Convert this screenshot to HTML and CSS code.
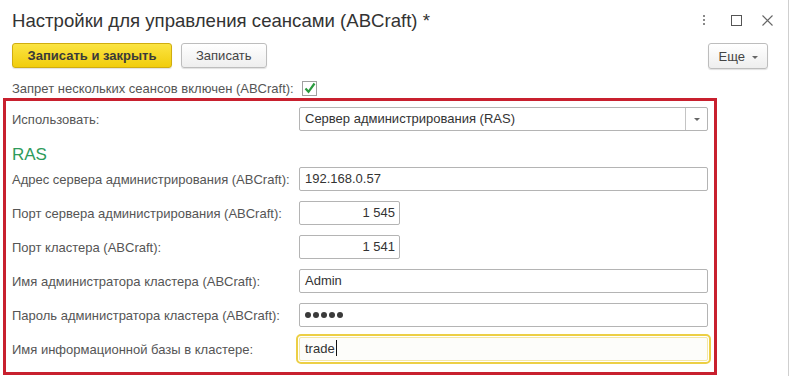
FILE: index.html
```html
<!DOCTYPE html>
<html lang="ru">
<head>
    <meta charset="UTF-8">
    <title>Настройки для управления сеансами (ABCraft)</title>
    <link rel="stylesheet" href="styles.css">
</head>
<body>
    <div class="window">
        <div class="title-bar">
            <div class="title">Настройки для управления сеансами (ABCraft) *</div>
            <div class="win-controls">
                <svg class="win-icon dots" width="4" height="12" viewBox="0 0 4 12">
                    <rect x="1" y="0" width="2" height="2" fill="#8a8a8a"/>
                    <rect x="1" y="4" width="2" height="2" fill="#8a8a8a"/>
                    <rect x="1" y="8" width="2" height="2" fill="#8a8a8a"/>
                </svg>
                <svg class="win-icon" width="11" height="11" viewBox="0 0 11 11">
                    <rect x="0.5" y="0.5" width="10" height="10" fill="none" stroke="#555" stroke-width="1"/>
                </svg>
                <svg class="win-icon" width="11" height="11" viewBox="0 0 11 11">
                    <path d="M0.5 0.5 L10.5 10.5 M10.5 0.5 L0.5 10.5" stroke="#666" stroke-width="1.1"/>
                </svg>
            </div>
        </div>

        <div class="toolbar">
            <button class="btn btn-primary">Записать и закрыть</button>
            <button class="btn">Записать</button>
            <button class="btn btn-more">Еще <span class="caret-down"></span></button>
        </div>

        <div class="check-row">
            <span class="label">Запрет нескольких сеансов включен (ABCraft):</span>
            <span class="checkbox">
                <svg width="13" height="13" viewBox="0 0 13 13">
                    <path d="M2.5 6.5 L5.5 9.8 L11.5 1.5" fill="none" stroke="#2a9a3e" stroke-width="2.2"/>
                </svg>
            </span>
        </div>

        <div class="group">
            <div class="row">
                <span class="label">Использовать:</span>
                <div class="field select">
                    <span class="value">Сервер администрирования (RAS)</span>
                    <span class="select-button"><span class="caret-down"></span></span>
                </div>
            </div>

            <div class="section-title">RAS</div>

            <div class="row">
                <span class="label">Адрес сервера администрирования (ABCraft):</span>
                <div class="field">192.168.0.57</div>
            </div>
            <div class="row">
                <span class="label">Порт сервера администрирования (ABCraft):</span>
                <div class="field number">1 545</div>
            </div>
            <div class="row">
                <span class="label">Порт кластера (ABCraft):</span>
                <div class="field number">1 541</div>
            </div>
            <div class="row">
                <span class="label">Имя администратора кластера (ABCraft):</span>
                <div class="field">Admin</div>
            </div>
            <div class="row">
                <span class="label">Пароль администратора кластера (ABCraft):</span>
                <div class="field password">
                    <span class="dot"></span><span class="dot"></span><span class="dot"></span><span class="dot"></span><span class="dot"></span>
                </div>
            </div>
            <div class="row">
                <span class="label">Имя информационной базы в кластере:</span>
                <div class="field focused">trade<span class="text-cursor"></span></div>
            </div>
        </div>
    </div>
</body>
</html>
```

FILE: styles.css
```css
body {
    margin: 0;
    background: #fff;
    font-family: "Liberation Sans", Arial, sans-serif;
    font-size: 13px;
    color: #333;
}

.window {
    width: 789px;
    height: 376px;
    border-right: 1px solid #cfcfcf;
    box-sizing: border-box;
}

/* Заголовок окна */
.title-bar {
    display: flex;
    align-items: center;
    justify-content: space-between;
    height: 41px;
    padding: 0 15px 0 12px;
}

.title {
    font-size: 18.6px;
    color: #333;
}

.win-controls {
    display: flex;
    align-items: center;
    gap: 20px;
}

.win-icon {
    display: block;
}

.dots {
    margin-right: 5px;
}

/* Кнопки командной панели */
.toolbar {
    display: flex;
    gap: 9px;
    padding: 2px 20px 0 12px;
}

.btn {
    height: 25px;
    padding: 0 14px;
    border: 1px solid #bdbdbd;
    border-radius: 3px;
    background: linear-gradient(#ffffff, #eeeeee);
    box-shadow: 0 1px 1px rgba(0, 0, 0, 0.12);
    font-family: inherit;
    font-size: 13px;
    color: #444;
}

.btn-primary {
    width: 160px;
    background: linear-gradient(#fbe443, #f1cd0c);
    border-color: #d0ad10;
    font-weight: bold;
    color: #3a3a3a;
}

.btn-more {
    margin-left: auto;
    width: 60px;
    padding: 0 8px;
    height: 26px;
}

.caret-down {
    display: inline-block;
    width: 0;
    height: 0;
    margin-left: 3px;
    vertical-align: middle;
    border-left: 3px solid transparent;
    border-right: 3px solid transparent;
    border-top: 3px solid #666;
}

/* Флажок */
.check-row {
    display: flex;
    align-items: center;
    height: 18px;
    padding: 10px 0 0 12px;
}

.label {
    color: #555;
}

.checkbox {
    width: 13px;
    height: 13px;
    margin-left: 8px;
    border: 1px solid #a0a0a0;
    background: #fff;
}

.checkbox svg {
    display: block;
}

/* Группа настроек RAS */
.group {
    width: 714px;
    height: 277px;
    margin: 1px 0 0 3px;
    padding: 6px 6px 0 6px;
    border: 3px solid #c8202e;
    box-sizing: border-box;
}

.row {
    display: grid;
    grid-template-columns: 287px 1fr;
    align-items: center;
    height: 24px;
    margin-bottom: 10px;
}

.field {
    height: 24px;
    line-height: 22px;
    padding: 0 5px;
    border: 1px solid #b4b4b4;
    border-radius: 2px;
    box-sizing: border-box;
    color: #333;
    background: #fff;
}

.field.number {
    width: 101px;
    text-align: right;
    padding-right: 4px;
}

.select {
    display: flex;
    padding-right: 0;
}

.select .value {
    flex: 1;
}

.select-button {
    width: 21px;
    border-left: 1px solid #c4c4c4;
    text-align: center;
}

.select-button .caret-down {
    margin-left: 0;
}

.section-title {
    height: 30px;
    padding-top: 8px;
    margin-top: -4px;
    box-sizing: border-box;
    font-size: 17px;
    line-height: 20px;
    color: #2e9b5b;
}

.password {
    display: flex;
    align-items: center;
    gap: 2px;
}

.dot {
    width: 6px;
    height: 6px;
    border-radius: 50%;
    background: #3a3a3a;
}

.focused {
    border-color: #f3e7a8;
    outline: 2px solid #eccf45;
    outline-offset: 1px;
    background: #fdfdfa;
}

.text-cursor {
    display: inline-block;
    width: 1px;
    height: 16px;
    margin-left: 1px;
    vertical-align: -3px;
    background: #111;
}
```
